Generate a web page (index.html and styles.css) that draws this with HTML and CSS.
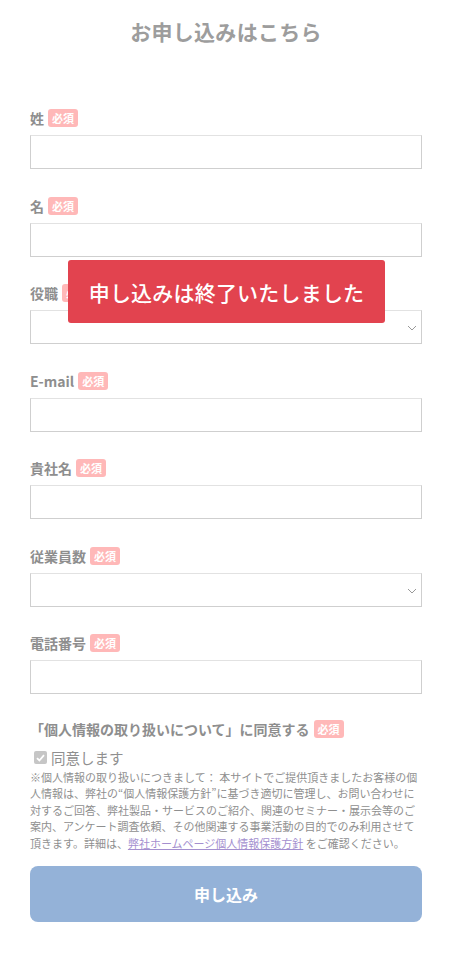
FILE: index.html
```html
<!DOCTYPE html>
<html lang="ja">
<head>
<meta charset="utf-8">
<title>お申し込みはこちら</title>
<link rel="stylesheet" href="styles.css">
</head>
<body>
<main class="page">
  <h1 class="title">お申し込みはこちら</h1>
  <form class="form">
    <div class="field">
      <div class="label-row"><span class="label">姓</span><span class="badge">必須</span></div>
      <input class="input" type="text">
    </div>
    <div class="field">
      <div class="label-row"><span class="label">名</span><span class="badge">必須</span></div>
      <input class="input" type="text">
    </div>
    <div class="field">
      <div class="label-row"><span class="label">役職</span><span class="badge">必須</span></div>
      <div class="select">
        <svg class="chev" width="10" height="6" viewBox="0 0 10 6"><path d="M1 1 L5 5 L9 1" fill="none" stroke="#999" stroke-width="1"/></svg>
      </div>
    </div>
    <div class="field">
      <div class="label-row"><span class="label">E-mail</span><span class="badge">必須</span></div>
      <input class="input" type="text">
    </div>
    <div class="field">
      <div class="label-row"><span class="label">貴社名</span><span class="badge">必須</span></div>
      <input class="input" type="text">
    </div>
    <div class="field">
      <div class="label-row"><span class="label">従業員数</span><span class="badge">必須</span></div>
      <div class="select">
        <svg class="chev" width="10" height="6" viewBox="0 0 10 6"><path d="M1 1 L5 5 L9 1" fill="none" stroke="#999" stroke-width="1"/></svg>
      </div>
    </div>
    <div class="field">
      <div class="label-row"><span class="label">電話番号</span><span class="badge">必須</span></div>
      <input class="input" type="text">
    </div>
    <div class="agree">
      <div class="label-row"><span class="label">「個人情報の取り扱いについて」に同意する</span><span class="badge">必須</span></div>
      <div class="check-row">
        <span class="checkbox"><svg width="9" height="8" viewBox="0 0 9 8"><path d="M1 4.2 L3.4 6.5 L8 1.2" fill="none" stroke="#fff" stroke-width="1.8"/></svg></span>
        <span class="check-text">同意します</span>
      </div>
      <p class="policy">※個人情報の取り扱いにつきまして： 本サイトでご提供頂きましたお客様の個人情報は、弊社の“個人情報保護方針”に基づき適切に管理し、お問い合わせに対するご回答、弊社製品・サービスのご紹介、関連のセミナー・展示会等のご案内、アンケート調査依頼、その他関連する事業活動の目的でのみ利用させて頂きます。詳細は、<a class="link" href="#">弊社ホームページ個人情報保護方針</a> をご確認ください。</p>
    </div>
    <button class="submit" type="button">申し込み</button>
  </form>
  <div class="notice">申し込みは終了いたしました</div>
</main>
</body>
</html>
```
FILE: styles.css
```css
* { box-sizing: border-box; }
html, body { margin: 0; padding: 0; background: #fff; }
body {
  font-family: "Noto Sans CJK JP", "Noto Sans", sans-serif;
  color: #8a8a8a;
}
.page {
  position: relative;
  width: 454px;
  padding: 16px 32px 40px 30px;
}
.title {
  margin: 0;
  text-align: center;
  font-size: 21px;
  line-height: 30px;
  font-weight: 700;
  color: #9d9d9d;
  letter-spacing: 0.3px;
}
.form {
  display: flex;
  flex-direction: column;
  margin-top: 63px;
}
.field {
  display: flex;
  flex-direction: column;
  gap: 8px;
  margin-bottom: 27.5px;
}
.label-row {
  display: flex;
  align-items: center;
  gap: 4px;
  height: 18px;
}
.label {
  font-size: 14px;
  line-height: 18px;
  font-weight: 700;
  color: #8e8e8e;
}
.badge {
  display: inline-block;
  height: 18px;
  padding: 0 4px;
  border-radius: 3px;
  background: #ffb8b8;
  color: #fff;
  font-size: 11px;
  line-height: 18px;
  font-weight: 700;
}
.input, .select {
  display: block;
  width: 392px;
  height: 34px;
  margin: 0;
  border: 1px solid #cfcfcf;
  border-top-color: #e2e2e2;
  background: #fff;
  border-radius: 0;
  outline: none;
}
.select { position: relative; }
.chev {
  position: absolute;
  right: 4px;
  top: 14px;
}
.agree {
  display: flex;
  flex-direction: column;
  margin-top: -2px;
}
.check-row {
  display: flex;
  align-items: center;
  gap: 4px;
  margin-top: 10px;
  padding-left: 4px;
  height: 20px;
}
.checkbox {
  display: inline-flex;
  align-items: center;
  justify-content: center;
  width: 13px;
  height: 13px;
  border-radius: 2px;
  background: #c6c6c6;
}
.check-text {
  font-size: 14.5px;
  line-height: 20px;
  color: #8f8f8f;
}
.policy {
  margin: 1px 0 0;
  font-size: 11px;
  line-height: 16.5px;
  color: #8f8f8f;
}
.link {
  color: #a48fcf;
  text-decoration: underline;
}
.submit {
  display: block;
  width: 392px;
  height: 56px;
  margin-top: 15px;
  border: none;
  border-radius: 8px;
  background: #94b2d8;
  color: #fff;
  font-family: inherit;
  font-size: 16px;
  font-weight: 700;
}
.notice {
  position: absolute;
  top: 260px;
  left: 68px;
  width: 317px;
  height: 63px;
  display: flex;
  align-items: center;
  justify-content: center;
  background: #e2434f;
  border-radius: 3px;
  color: #fff;
  font-size: 21px;
  font-weight: 500;
  letter-spacing: 0.2px;
}
```
